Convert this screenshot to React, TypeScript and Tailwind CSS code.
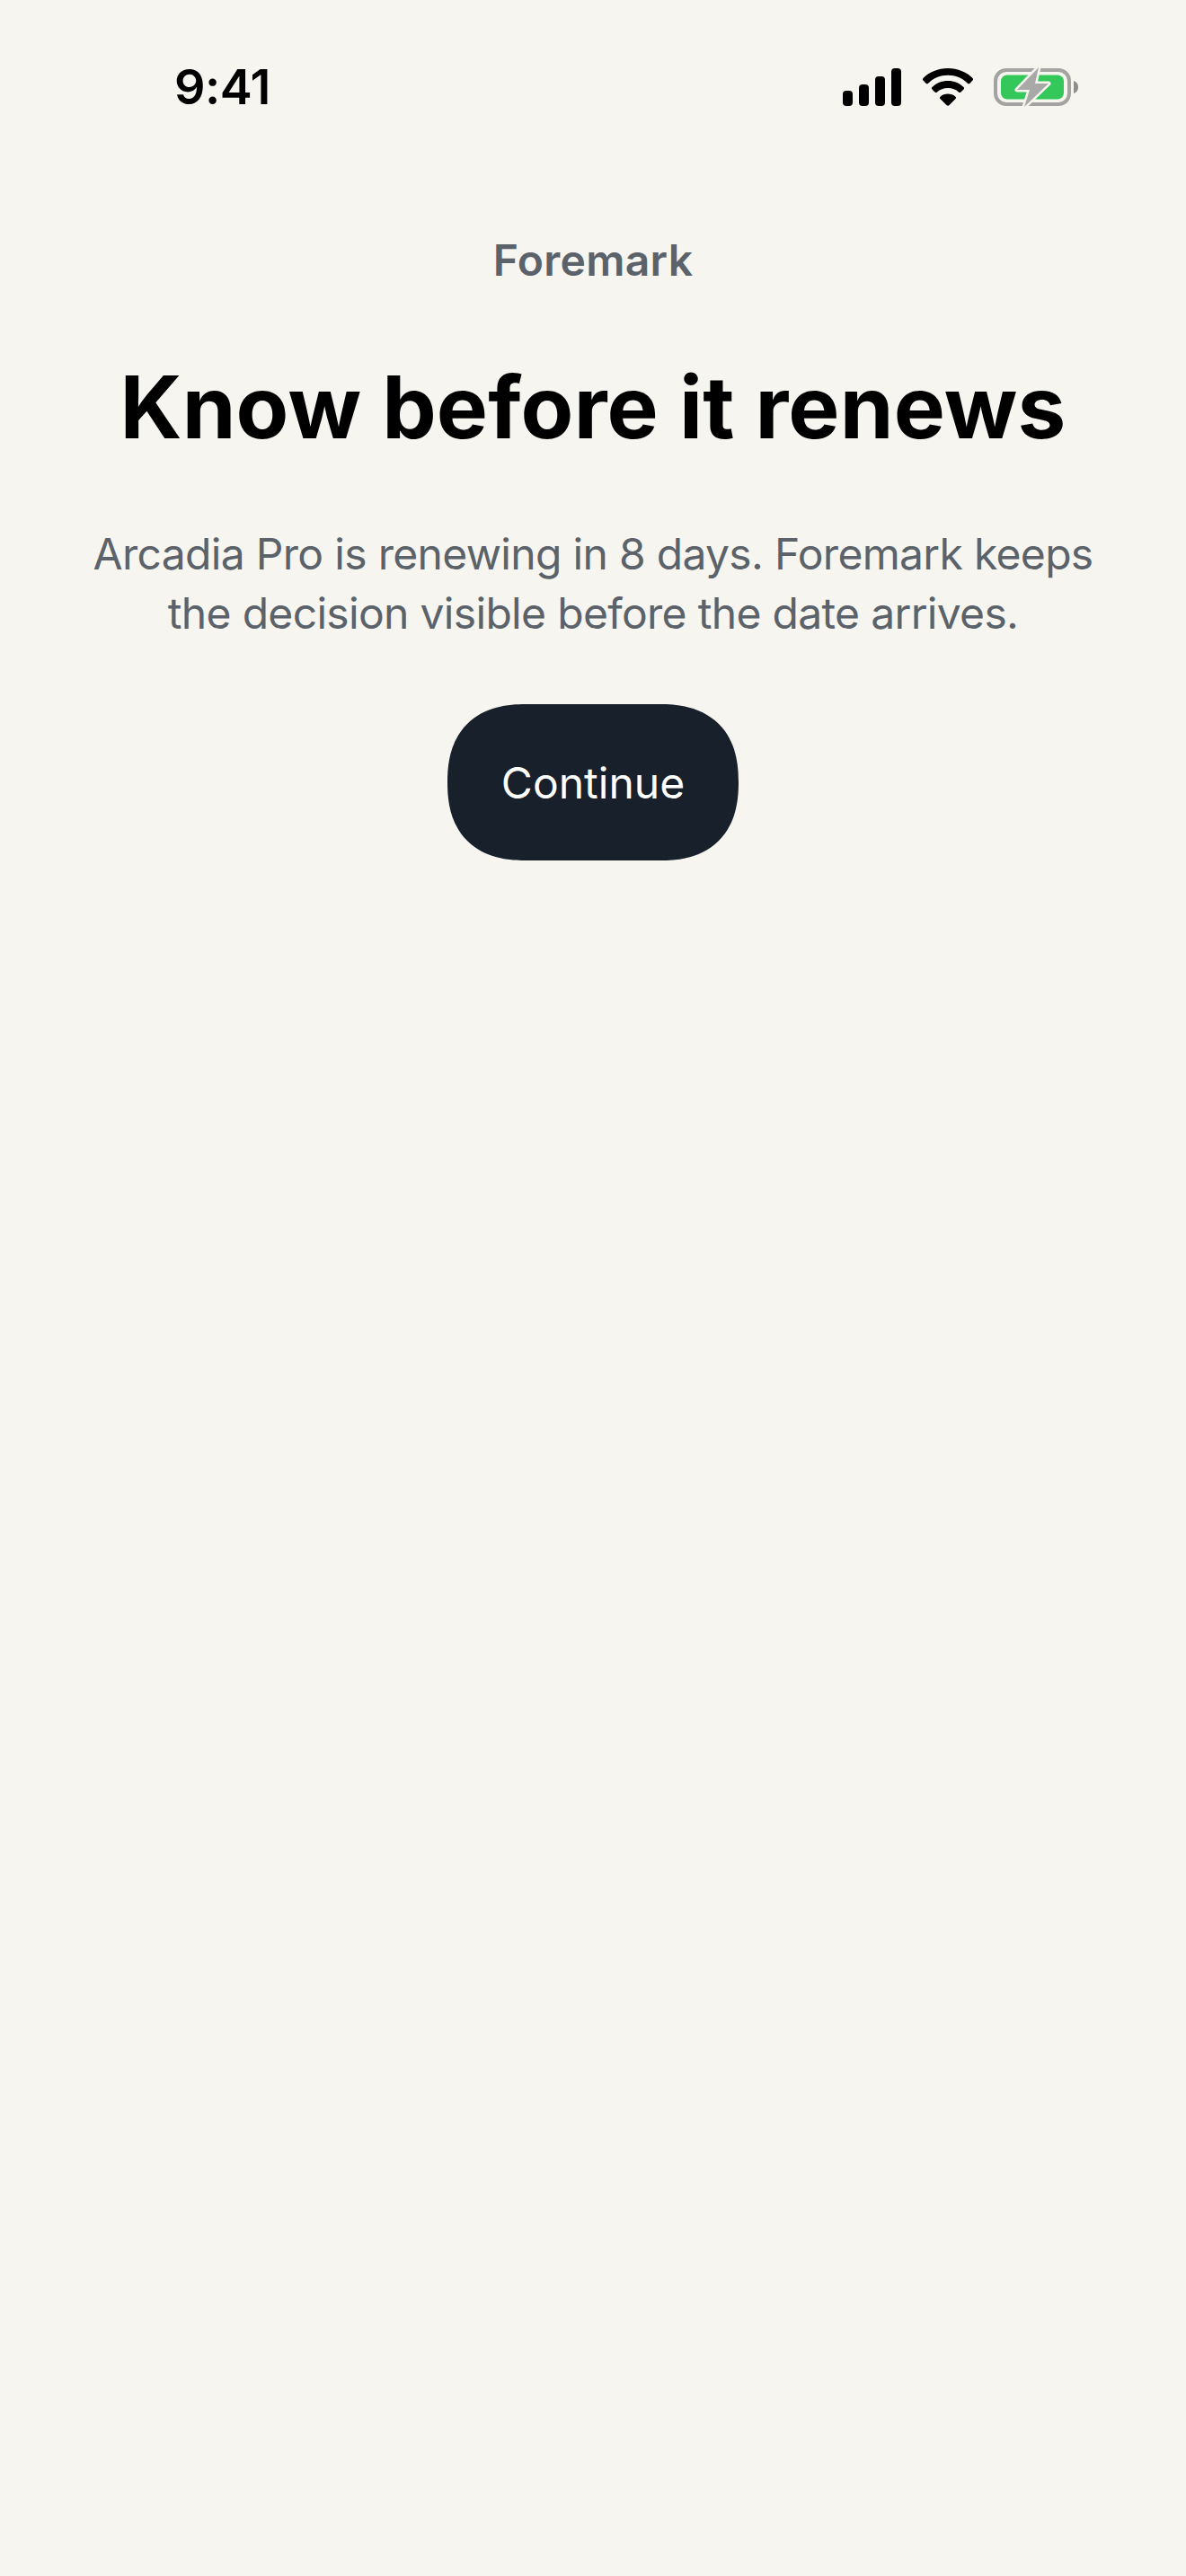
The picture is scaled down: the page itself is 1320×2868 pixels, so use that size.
function SignalIcon() {
  return (
    <svg width="66" height="42" viewBox="0 0 66 42" fill="#000">
      <rect x="0" y="25" width="11" height="17" rx="4" />
      <rect x="18" y="18" width="11" height="24" rx="4" />
      <rect x="36" y="9" width="11" height="33" rx="4" />
      <rect x="54" y="0" width="11" height="42" rx="4" />
    </svg>
  )
}

function WifiIcon() {
  return (
    <svg width="58" height="42" viewBox="0 0 58 42" fill="#000">
      <path d="M29 0C18 0 8.500 4 1.500 11c-.8.800-.8 1.800 0 2.600l3 3.100c.8.800 1.800.8 2.600 0C13 11 20.500 7.800 29 7.800S45 11 50.900 16.700c.8.800 1.800.8 2.600 0l3-3.100c.8-.8.800-1.800 0-2.600C49.500 4 40 0 29 0z" />
      <path d="M29 14c-6.800 0-13 2.600-17.500 7-.8.800-.8 1.700 0 2.500l3 3c.8.800 1.700.8 2.500.1 3.100-2.800 7.300-4.500 12-4.500s8.900 1.700 12 4.500c.8.700 1.700.7 2.500-.1l3-3c.8-.8.800-1.700 0-2.500C42 16.600 35.800 14 29 14z" />
      <path d="M29 28.500c-3.300 0-6.300 1.200-8.500 3.200-.7.700-.7 1.500 0 2.200l7 7.200c.9.900 2.100.9 3 0l7-7.200c.7-.7.700-1.500 0-2.200-2.200-2-5.200-3.200-8.500-3.200z" />
    </svg>
  )
}

function BatteryIcon() {
  return (
    <svg width="94" height="44" viewBox="0 0 94 44">
      <rect x="2" y="3" width="82" height="38" rx="12" fill="none" stroke="#a3a3a1" strokeWidth="4" />
      <rect x="8" y="8.500" width="70" height="27" rx="7" fill="#34c759" />
      <path d="M89 15c3 .8 5 3.600 5 7s-2 6.200-5 7z" fill="#8e8e8c" />
      <path d="M50 0L26 25h14l-6 19 27-26H46z" fill="#a9a9a7" stroke="#f6f5f0" strokeWidth="5" strokeLinejoin="round" paintOrder="stroke" />
    </svg>
  )
}

export default function App() {
  return (
    <main className="min-h-[2868px] bg-[#f6f5f0] font-['Inter',sans-serif]">
      <div className="flex h-[194px] items-center justify-between pl-[194px] pr-[120px]">
        <span className="text-[54px] font-semibold leading-none tracking-[-0.5px] text-black">9:41</span>
        <div className="flex items-center gap-[22px]">
          <SignalIcon />
          <WifiIcon />
          <BatteryIcon />
        </div>
      </div>
      <div className="flex flex-col items-center px-[60px] pt-[66px] text-center">
        <p className="text-[48px] font-semibold leading-[60px] tracking-[0.3px] text-[#5b626a]">Foremark</p>
        <h1 className="mt-[78px] text-[96px] font-bold leading-[110px] tracking-[0.2px] text-black">Know before it renews</h1>
        <p className="mt-[76px] text-[48px] leading-[66px] tracking-[-0.68px] text-[#5b626a]">
          Arcadia Pro is renewing in 8 days. Foremark keeps
          <br />
          the decision visible before the date arrives.
        </p>
        <button className="mt-[68px] h-[174px] w-[324px] rounded-[87px] bg-[#17202b] pt-[2px] text-[48px] text-white [corner-shape:superellipse(1.25)]">Continue</button>
      </div>
    </main>
  )
}
